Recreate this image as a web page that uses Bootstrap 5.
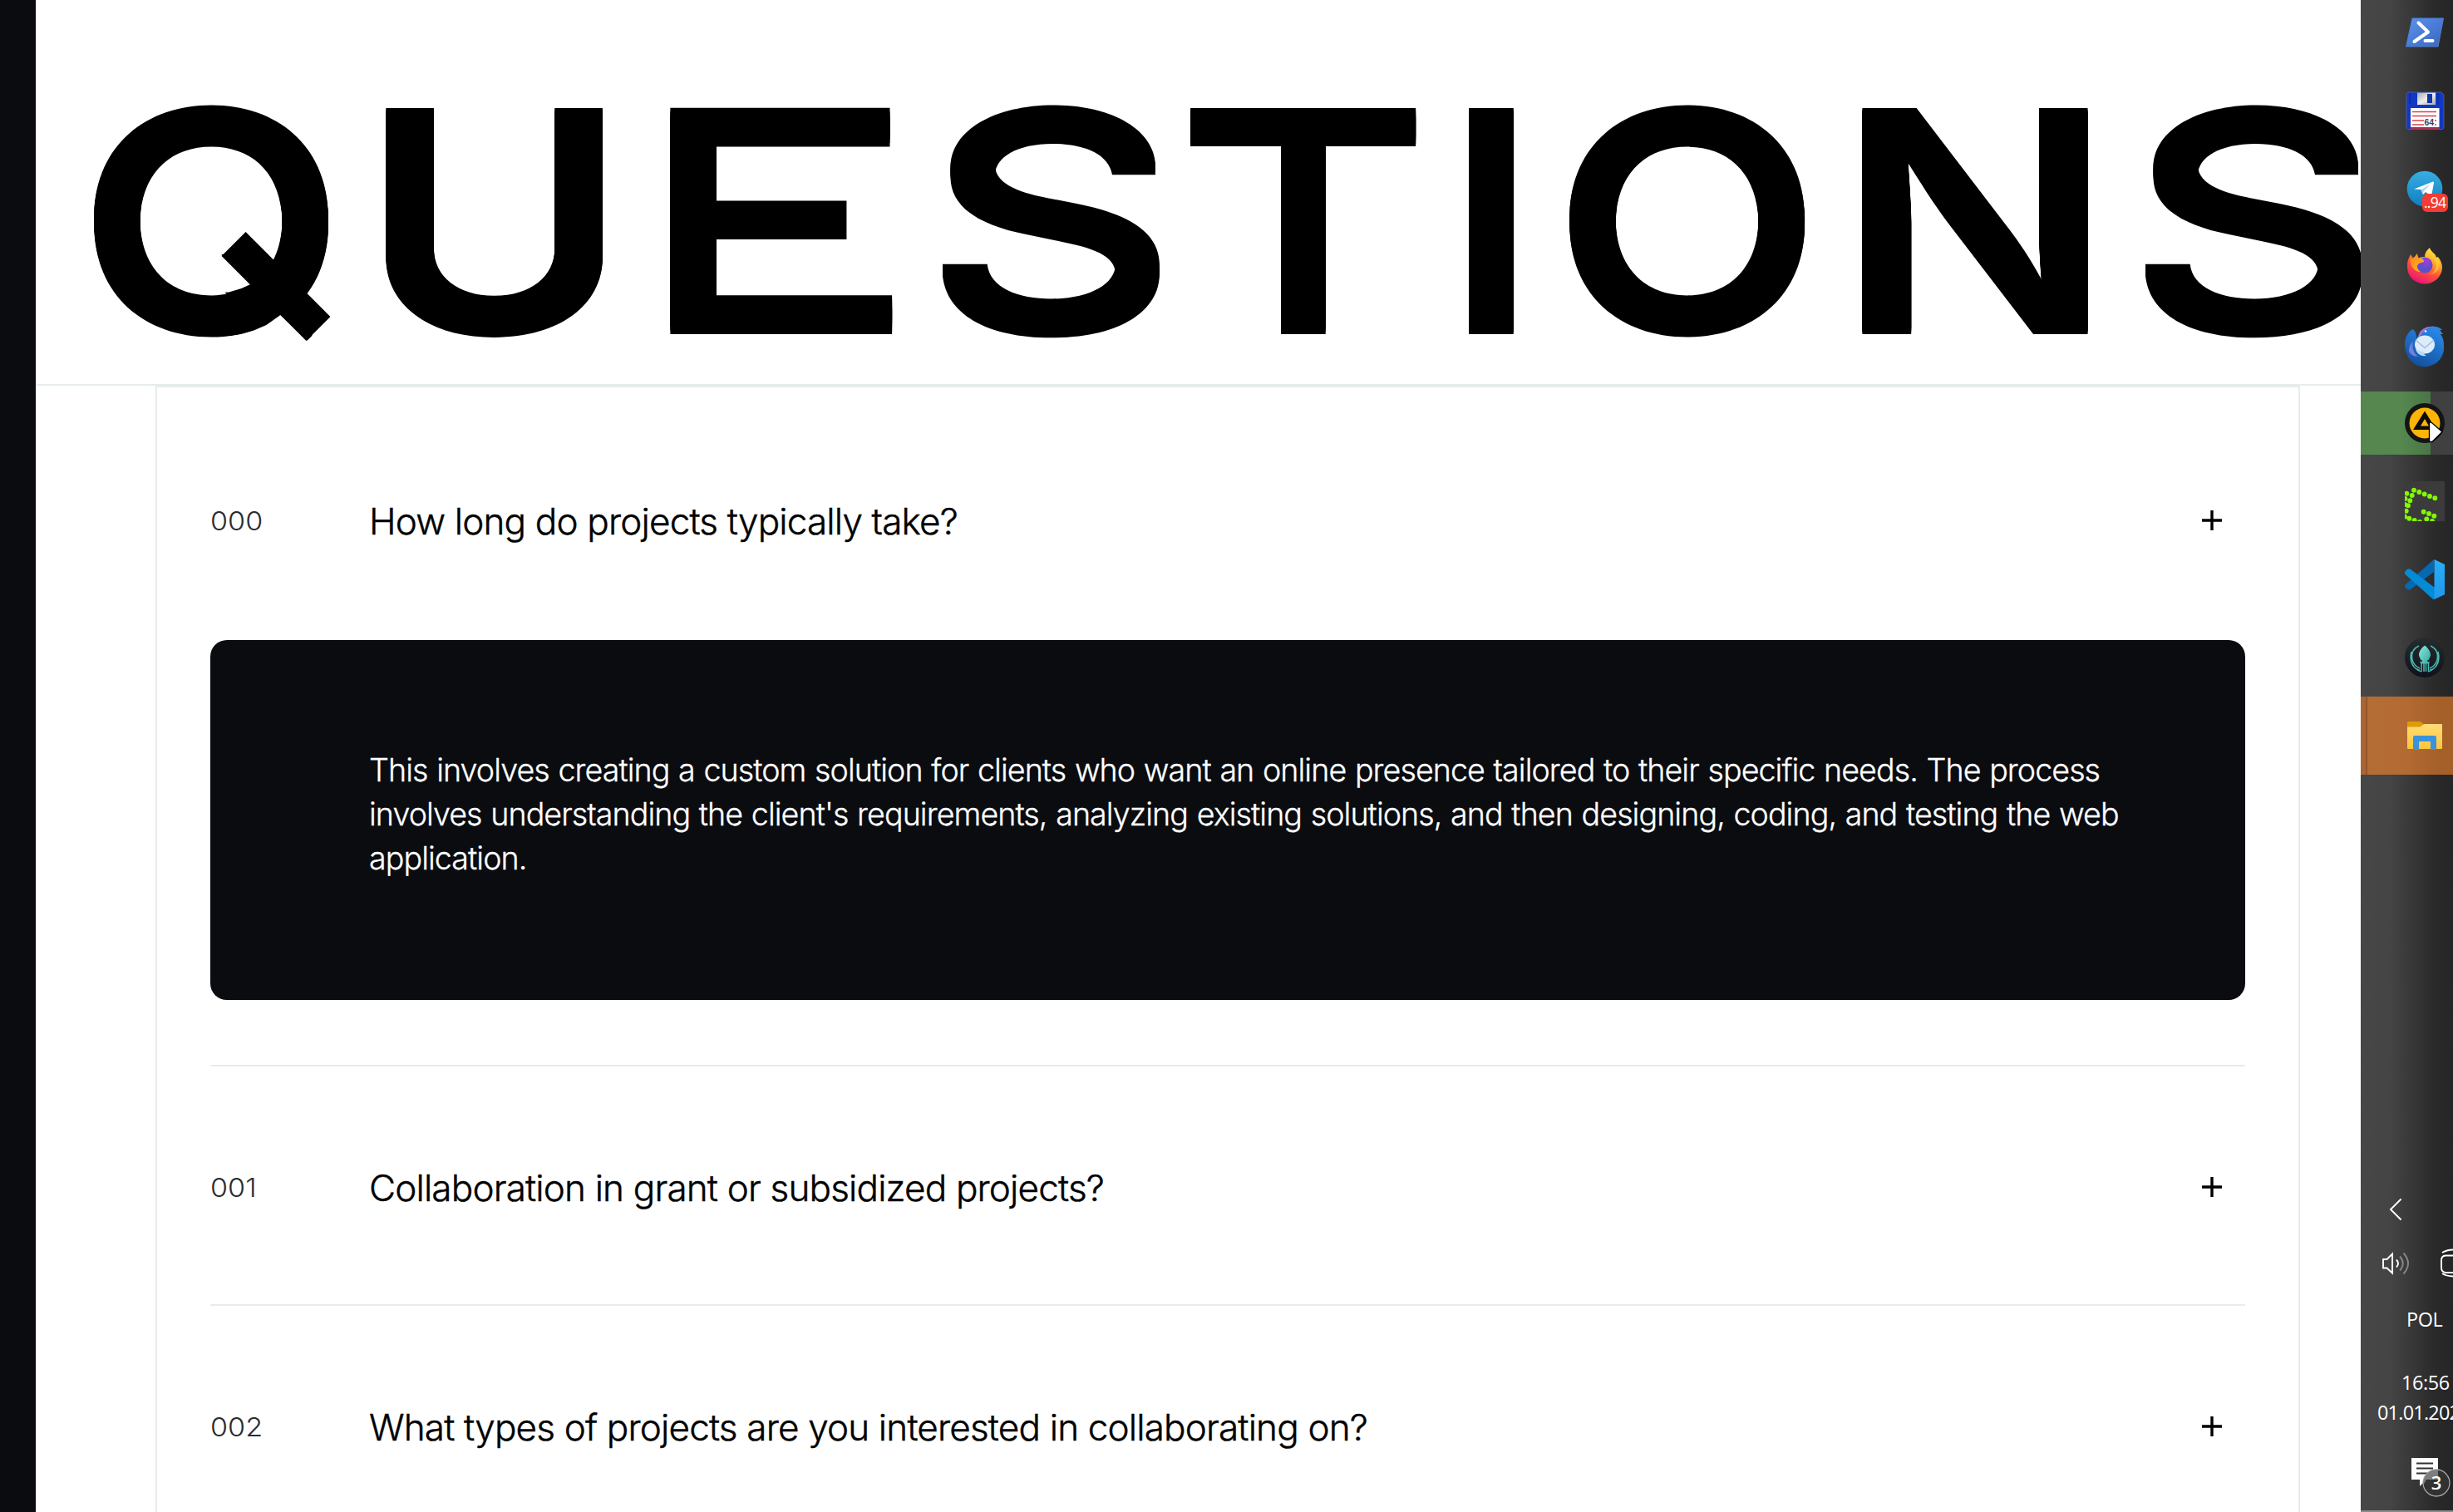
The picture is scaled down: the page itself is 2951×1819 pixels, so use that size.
<!DOCTYPE html>
<html lang="en">
<head>
<meta charset="utf-8">
<title>Questions</title>
<link href="https://cdn.jsdelivr.net/npm/bootstrap@5.3.0/dist/css/bootstrap.min.css" rel="stylesheet">
<style>
  :root { --ink: #0a0c10; --rule: #e6edeb; }
  body { font-family: Inter, sans-serif; color: #000; background: #fff; }
  .side-rail { width: 43px; background: var(--ink); }
  .page { min-width: 0; }

  /* Headline: every letter is widened to extended-grotesk proportions */
  .hero { height: 464px; padding: 79px 0 0 48.6px; border-bottom: 2px solid var(--rule); }
  .hero-title { font-size: 374px; line-height: 374px; font-weight: 600; white-space: nowrap; }
  .hero-title span {
    --k: 8px; --sx: 1.13; --sy: .971;
    flex: none; width: var(--w);
    transform: scale(var(--sx), var(--sy)); transform-origin: 0 323px;
    text-shadow: 0 calc(var(--k) * -.25) 0 #000, 0 calc(var(--k) * -.5) 0 #000, 0 calc(var(--k) * -.75) 0 #000, 0 calc(var(--k) * -1) 0 #000;
  }
  .hero-title .g-q { --w: 340.5px; --sx: 1.128;
    clip-path: path(evenodd, "M-10 12H291V290L271.6 301.4L246 331L217.5 299.3L202.5 311.7L189.2 318.4L175.9 323L145 329.5H-10Z M122.7 216L147.5 216L185.6 261.2L175.9 266.4L162.6 271L151 272L122.7 248.8Z"); }
  .hero-title .g-u { --w: 322.3px; --sx: 1.181; }
  .hero-title .g-e { --w: 354.2px; --sx: 1.593; --k: 19.3px; --sy: .934; font-weight: 400;
    clip-path: polygon(0 0, 230px 0, 230px 86px, 166px 86px, 166px 268px, 230px 268px, 230px 340px, 0 340px); }
  .hero-title .g-s { --w: 302.9px; --sx: 1.286; --k: 12.5px; --sy: .956; font-weight: 500; }
  .hero-title .g-t { --w: 325.8px; --sx: 1.283; --k: 12.5px; --sy: .956; font-weight: 500; }
  .hero-title .g-i { --w: 130.2px; --sx: 1.1; }
  .hero-title .g-o { --w: 340.6px; --sx: 1.132; }
  .hero-title .g-n { --w: 347.5px; --sx: 1.183; }
  /* straight 45 degree tail over the bowl of the Q */
  .hero-title::after { content: ""; position: absolute; left: 168.9px; top: 245px; width: 144px; height: 41px; background: #000; transform: rotate(45deg); }

  .faq { margin: 0 73px 0 144px; padding: 0 64px; border: 2px solid var(--rule); border-bottom: 0; }
  .faq-item + .faq-item { border-top: 2px solid var(--rule); }
  .faq-row { height: 286px; padding: 3px 0 0; }
  .faq-item:first-child .faq-row { height: 304px; padding-top: 16px; }
  .faq-num { width: 191px; font-size: 31px; font-weight: 300; color: #2b2d30; padding-top: 3px; }
  .faq-num span { display: inline-block; transform: scaleX(1.1); transform-origin: 0 0; }
  .faq-q { font-size: 44px; font-weight: 300; letter-spacing: -.82px; -webkit-text-stroke: .45px #000; padding-top: 2px; }
  .faq-plus { margin-right: 28px; }
  .faq-answer { height: 433px; margin-bottom: 78px; padding: 129.6px 0 0 191px; border-radius: 20px; background: var(--ink); color: #fff;
    font-size: 37.6px; line-height: 53.4px; font-weight: 300; letter-spacing: -.92px; word-spacing: 1px; -webkit-text-stroke: .3px #fff; }

  .taskbar { width: 111px; overflow: hidden; color: #fff; font-family: "Open Sans", sans-serif;
    background: linear-gradient(90deg, #474747 0, #444 32%, #383838 55%, #2a2a2a 80%, #252525 100%); border-bottom: 2px solid #8b8b8b; }
  .apps { margin-top: -8px; }
  .app { height: 94px; padding-left: 53px; }
  .app svg, .tray svg { display: block; overflow: visible; flex: none; }
  .app-playing { height: 76px; margin: 9px 0; background: linear-gradient(90deg, #55874f 0 50px, #4a7546 84px, #404040 84px); }
  .app-open { background: linear-gradient(90deg, #ab6530 0 6px, #94552a 6px 8px, #b56d36 8px, #b36a33 50%, #a55f29 85%); }
  .lang, .clock { font-size: 23.4px; letter-spacing: -.4px; white-space: nowrap; }
  .lang { height: 58px; line-height: 57px; padding-left: 55px; }
  .clock { height: 124px; padding-top: 28px; line-height: 36px; }
  .clock-time { padding-left: 49px; }
  .clock-date { padding-left: 20px; letter-spacing: -.75px; }
</style>
<script src="https://cdn.jsdelivr.net/npm/bootstrap@5.3.0/dist/js/bootstrap.bundle.min.js"></script>
</head>
<body class="vh-100 d-flex overflow-hidden">
<aside class="side-rail flex-shrink-0"></aside>

<main class="page flex-grow-1 overflow-hidden">
  <header class="hero">
    <h1 class="hero-title d-flex m-0 position-relative"><span class="g-q">Q</span><span class="g-u">U</span><span class="g-e">E</span><span class="g-s">S</span><span class="g-t">T</span><span class="g-i">I</span><span class="g-o">O</span><span class="g-n">N</span><span class="g-s">S</span></h1>
  </header>

  <section class="faq">
    <article class="faq-item">
      <div class="faq-row d-flex align-items-center">
        <div class="faq-num"><span>000</span></div>
        <div class="faq-q flex-grow-1">How long do projects typically take?</div>
        <svg class="faq-plus" width="24" height="24" viewBox="0 0 24 24"><path d="M12 0v24M0 12h24" stroke="#000" stroke-width="3.4"/></svg>
      </div>
      <div class="faq-answer text-nowrap">This involves creating a custom solution for clients who want an online presence tailored to their specific needs. The process<br>involves understanding the client's requirements, analyzing existing solutions, and then designing, coding, and testing the web<br>application.</div>
    </article>
    <article class="faq-item">
      <div class="faq-row d-flex align-items-center">
        <div class="faq-num"><span>001</span></div>
        <div class="faq-q flex-grow-1">Collaboration in grant or subsidized projects?</div>
        <svg class="faq-plus" width="24" height="24" viewBox="0 0 24 24"><path d="M12 0v24M0 12h24" stroke="#000" stroke-width="3.4"/></svg>
      </div>
    </article>
    <article class="faq-item">
      <div class="faq-row d-flex align-items-center">
        <div class="faq-num"><span>002</span></div>
        <div class="faq-q flex-grow-1">What types of projects are you interested in collaborating on?</div>
        <svg class="faq-plus" width="24" height="24" viewBox="0 0 24 24"><path d="M12 0v24M0 12h24" stroke="#000" stroke-width="3.4"/></svg>
      </div>
    </article>
  </section>
</main>

<aside class="taskbar flex-shrink-0 d-flex flex-column">
  <svg width="0" height="0" class="d-block">
    <defs>
      <linearGradient id="psG" x2="1" y2="1"><stop stop-color="#5b93ee"/><stop offset="1" stop-color="#3a66bd"/></linearGradient>
      <linearGradient id="tgG" x2="0" y2="1"><stop stop-color="#37aee2"/><stop offset="1" stop-color="#0f7fc0"/></linearGradient>
      <linearGradient id="shG" x2="1" y2="1"><stop stop-color="#aaa"/><stop offset=".5" stop-color="#eee"/><stop offset="1" stop-color="#aaa"/></linearGradient>
      <linearGradient id="ffG" x1=".8" x2=".3" y2="1"><stop stop-color="#fff04a"/><stop offset=".3" stop-color="#ffb52a"/><stop offset=".6" stop-color="#ff5535"/><stop offset="1" stop-color="#e5107a"/></linearGradient>
      <linearGradient id="ffO" x2="1" y2="1"><stop stop-color="#ff8a16"/><stop offset="1" stop-color="#ffb32e"/></linearGradient>
      <radialGradient id="ffP" cx=".6" cy=".25"><stop stop-color="#a13be0"/><stop offset="1" stop-color="#5b50c8"/></radialGradient>
      <linearGradient id="tbG" x1=".8" x2=".3" y2="1"><stop stop-color="#2a8bea"/><stop offset="1" stop-color="#124f9f"/></linearGradient>
      <linearGradient id="vsG" x2="0" y2="1"><stop stop-color="#2aaef5"/><stop offset="1" stop-color="#1f97ee"/></linearGradient>
      <linearGradient id="gkB" x2="0" y2="1"><stop stop-color="#262c2c"/><stop offset="1" stop-color="#10121c"/></linearGradient>
      <linearGradient id="gkG" x2="1" y2="1"><stop stop-color="#8aeae0"/><stop offset="1" stop-color="#38a39c"/></linearGradient>
      <linearGradient id="fdG" x2="0" y2="1"><stop stop-color="#ffdc78"/><stop offset="1" stop-color="#fdc63a"/></linearGradient>
      <clipPath id="tile48"><path d="M0 0h48v48H0z"/></clipPath>
    </defs>
  </svg>
  <nav class="apps">
    <div class="app d-flex align-items-center">
      <svg width="48" height="48"><path d="M9 7H46.5L40 41H1.500Z" fill="url(#psG)" stroke="#4a7fd8" stroke-linejoin="round"/><path d="M16.500 12.500 28 23.500 11.500 35M24.500 34h9" fill="none" stroke="#fff" stroke-width="4" stroke-linecap="round" stroke-linejoin="round"/></svg>
    </div>
    <div class="app d-flex align-items-center">
      <svg width="48" height="48"><path d="M3.500 2H44l3 3v40l-1.500 1.500h-42L2 45V3.500Z" fill="#1238c4" stroke="#5a6a9a" stroke-width=".7"/><path d="M6 3v13M40 3v13" stroke="#0a2690"/><path d="M15 2.500h22V17H15z" fill="url(#shG)"/><path d="M27 4h6v11h-6z" fill="#1238a8"/><path d="M7 21h34.500v23H7z" fill="#fff"/><path d="M7 44h34.500v2H7z" fill="#b02a50"/><path d="M9 25.500h29M9 30.500h29M9 36h14M9 41h14M36 36h2M36 41h2" stroke="#d8404e" stroke-width="1.300"/><text x="23.500" y="41.500" font-size="10.500" font-weight="600" fill="#444" font-family="Liberation Sans">64</text></svg>
    </div>
    <div class="app d-flex align-items-center">
      <svg width="48" height="48"><circle cx="24" cy="24" r="21.300" fill="url(#tgG)"/><path d="M11 24.500 34 15.500q1.200 0 1 1.500L32 33l-7-5-3 3-2.500-6L11 24.500z" fill="#fff"/><path d="M19.500 25 31 18.500 22 28l-.500 3z" fill="#b8d8ec"/><rect x="21" y="30" width="31" height="22" rx="6" fill="#f23c34"/><text x="23" y="47" font-size="17.500" fill="#fff" textLength="27">..94</text></svg>
    </div>
    <div class="app d-flex align-items-center">
      <svg width="48" height="48"><path d="M3 23C3 15 6 12 7 9l3 5 5-6 1 6c3-2 6-2 8-2C24 6 28 3 30 1c1 4 5 6 7 9l1 3 2-1c3 4 5 8 5 13A21 20 0 0 1 3 24Z" fill="url(#ffG)"/><circle cx="24" cy="22" r="9.500" fill="url(#ffP)"/><path d="M7 15l8-5 2 4c4-1 6 1 6 4l-6 2c-3 2-3 7 2 10-8 0-13-8-12-15Z" fill="url(#ffO)"/><path d="M34 13c7 7 4 19-6 20 8 1 15-5 14-15l-4-6Z" fill="#ffd23e" opacity=".6"/></svg>
    </div>
    <div class="app d-flex align-items-center">
      <svg width="48" height="48"><path d="M0 27V20c2-8 5-13 10-15 3 3 4 6 4 11l3-5C20 4 28 1 36 2c4 0 7 2 9 4h-3l4 5h-3c3 4 4 8 4 13a23 23 0 0 1-46 6Z" fill="url(#tbG)"/><path d="M17 11C20 4 28 1 36 2c-8 0-13 4-19 14Z" fill="#9a72dd"/><circle cx="25" cy="7.500" r="1.200" fill="#fff"/><path d="M5 32c0-6 2-10 5-12-2 7 1 14 6 18-6 0-9-3-11-6Z" fill="#6f7fe0"/><ellipse cx="24" cy="23.500" rx="12" ry="11" fill="#dcecfb"/><path d="M13 18 24 27.500 35 18" fill="none" stroke="#a5bcda" stroke-width="1.500"/><path d="M13 29c2 7 8 9 13 8-2-1-3-2-3-4Z" fill="#b9daf6"/></svg>
    </div>
    <div class="app app-playing d-flex align-items-center">
      <svg width="48" height="48"><circle cx="24" cy="24" r="24" fill="#141414"/><circle cx="24" cy="24" r="18.500" fill="#fdb406"/><path d="M24 9.500 38 32H10ZM24 19l-5 8.500h10Z" fill="#0c0c0c" fill-rule="evenodd"/><path d="M29.500 22.500 33 24l12 10.500L33 46.500h-3.500Z" fill="#fff" stroke="#000" stroke-width="1.300"/></svg>
    </div>
    <div class="app d-flex align-items-center">
      <svg width="48" height="48"><path d="M0 0h48v48H0z" fill="#3b3b3b"/><g clip-path="url(#tile48)"><path d="M11 10.700h0M17.300 13h0M23.700 15.500h0M30 18h0M36.300 20.300h0M2.300 14.700h0M8.700 17h0M6.300 23.300h0M4 29.300h0M1.700 35.700h0M.500 21h0M0 28h0M0 42.500h0M5.300 44.700h0M11.700 47h0M18 49h0M22.700 36.700h0M29 39h0M35.300 41.700h0M26.300 45.500h0M33 48h0" stroke="#83fa05" stroke-width="5.900" stroke-linecap="round"/></g></svg>
    </div>
    <div class="app d-flex align-items-center">
      <svg width="48" height="48"><path d="M35 0V15L7 36q-2 1.500-4 0L0 33.500V31Z" fill="#0668b0"/><path d="M0 14.500 3 12q2-1.500 4 0L36 34V48H34L0 17.500Z" fill="#058ad6"/><path d="M35.500 0 48 6V42.300L35.500 48Z" fill="url(#vsG)"/></svg>
    </div>
    <div class="app d-flex align-items-center">
      <svg width="48" height="48"><circle cx="24" cy="24" r="24" fill="url(#gkB)"/><path d="M24 9.500c3 2 7 7 7 11 0 3-2 4-2 7l1 2-2 2h-8l-2-2 1-2c0-3-2-4-2-7 0-4 4-9 7-11Z" fill="url(#gkG)"/><g fill="none" stroke="#4cbab2" stroke-width="1.500"><path d="M17 10C5 15 3 35 18 39.500M31 10C43 15 45 35 30 39.500M11 14C6 23 9 33 18 37M37 14C42 23 39 33 30 37M8 17C5 28 10 38 20 41M40 17C43 28 38 38 28 41M20 30V41M23 31V41M25.500 31V41M28.500 30V41"/></g><path d="M19.500 28h0M28.500 28h0" stroke="#123" stroke-width="2.600" stroke-linecap="round"/></svg>
    </div>
    <div class="app app-open d-flex align-items-center">
      <svg width="48" height="48"><path d="M3 8q0-1 1-1H18q2 0 5 3.500L19 14H3Z" fill="#dd9b05"/><path d="M3 13.500H17q2 0 3.500-1.500T24 10H44q1 0 1 1V39q0 1-1 1H4q-1 0-1-1Z" fill="url(#fdG)"/><path d="M10 41V26q0-2 2-2H36q2 0 2 2V41H31V31H17V41Z" fill="#3a93da"/></svg>
    </div>
  </nav>

  <div class="tray mt-auto">
    <svg width="111" height="51" fill="none" stroke="#fff" stroke-width="1.900"><path d="M48.500 12.500 36 25 48.500 37.500"/></svg>
    <svg width="111" height="78" fill="none" stroke="#fff" stroke-width="1.900"><path d="M27 34v10.500h4.500l6.500 6v-23L31.500 34Z"/><path d="M43 34.500q4 4.500 0 9"/><path d="M47 30.500q7.500 8.500 0 17M51.500 26.500q11 12.500 0 25" stroke="#858585"/><path d="M97 35v9q0 5 5 6h12M97 35q0-5 5-5.500h12M98 26q6-4 17-3.500M98 51q6 4 17 3.500"/></svg>
    <div class="lang">POL</div>
    <div class="clock"><div class="clock-time">16:56</div><div class="clock-date">01.01.2022</div></div>
    <svg width="111" height="76"><path d="M61 13h32v26H79l-8 8v-8H61Z" fill="#fff"/><path d="M67 19.500h20M67 25.500h20M67 31.500h14" stroke="#333" stroke-width="2"/><circle cx="91" cy="43" r="16" fill="#333" fill-opacity=".97" stroke="#a5a5a5" stroke-width="1.300"/><path d="M75.500 45A16 16 0 0 1 93 27.500V39H79Z" fill="#7d7d7d"/><text x="91" y="50.500" text-anchor="middle" font-size="22" font-weight="600" fill="#fff">3</text></svg>
  </div>
</aside>
</body>
</html>
